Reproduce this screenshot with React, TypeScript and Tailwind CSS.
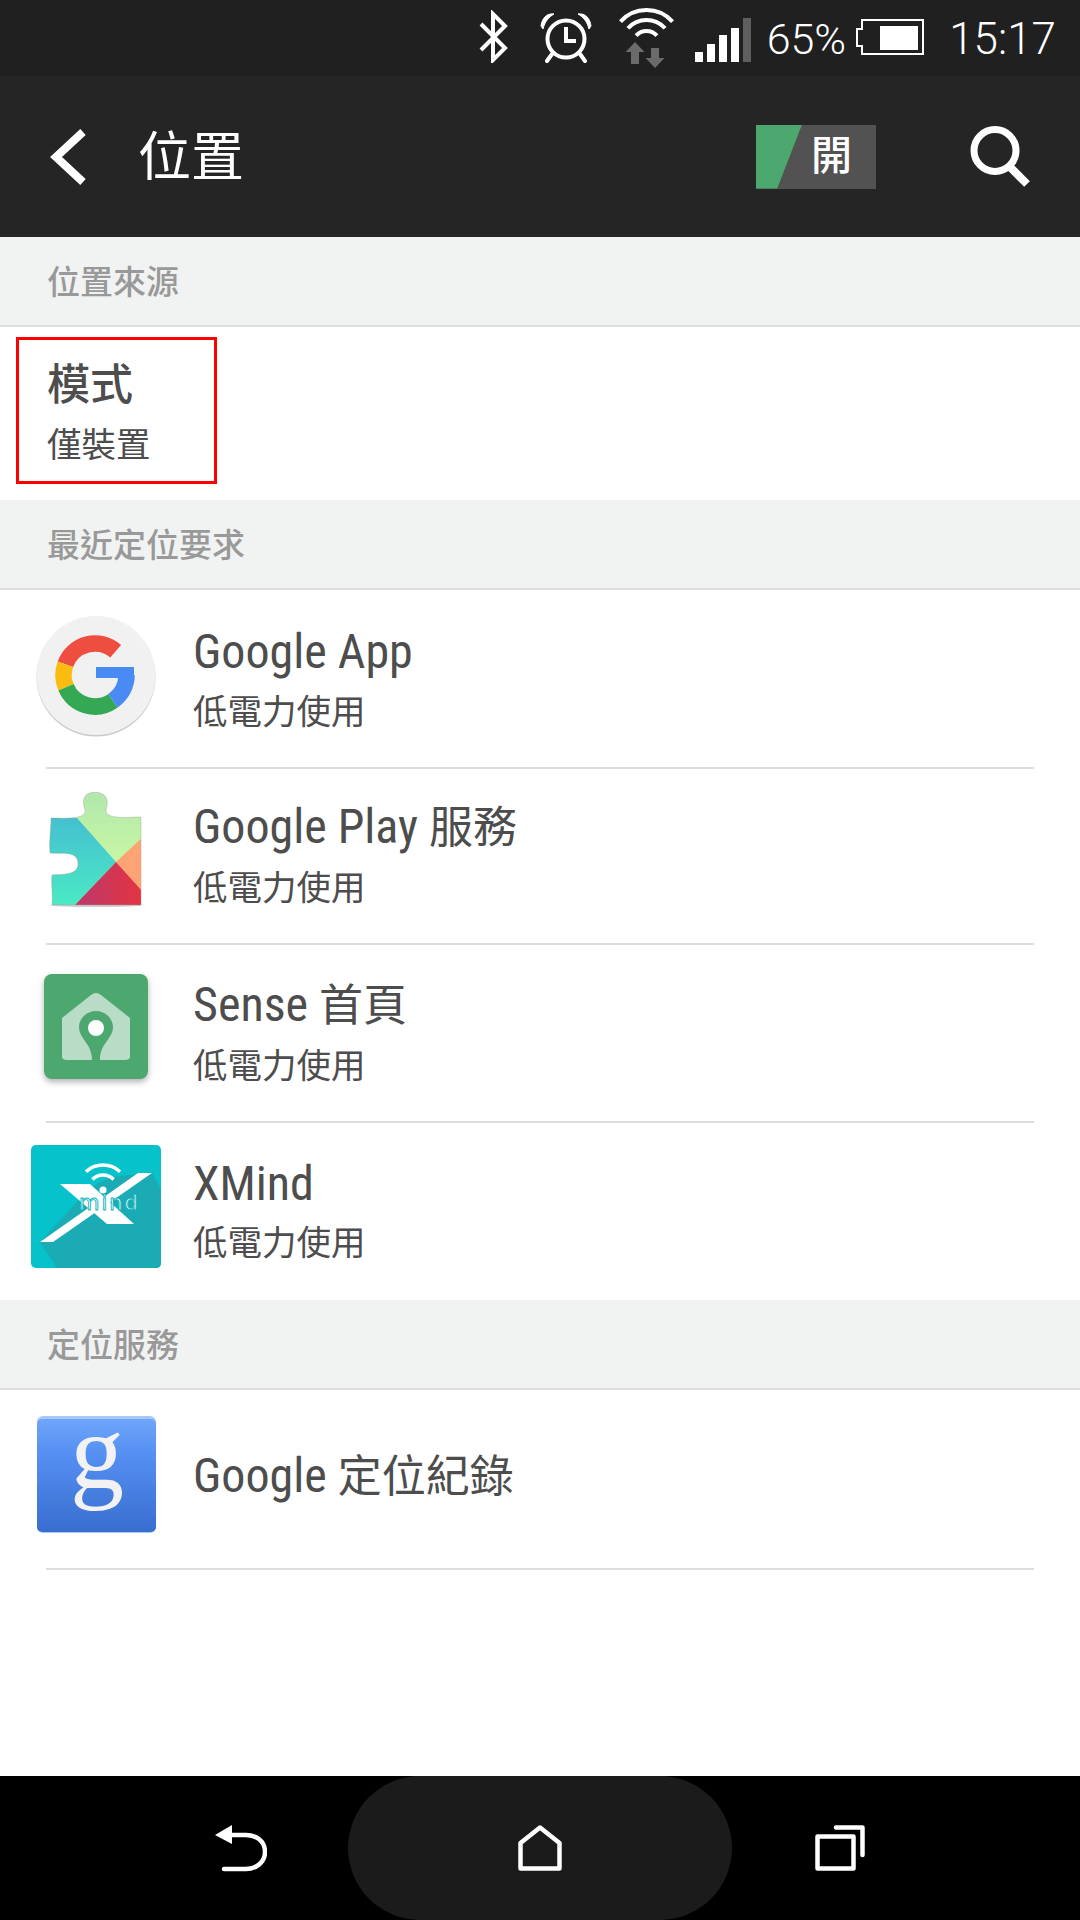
import React from "react";

const polar = (cx: number, cy: number, r: number, a: number) => {
  const t = (a * Math.PI) / 180;
  return [cx + r * Math.cos(t), cy + r * Math.sin(t)];
};
const arc = (cx: number, cy: number, r: number, a0: number, a1: number) => {
  const [x0, y0] = polar(cx, cy, r, a0);
  const [x1, y1] = polar(cx, cy, r, a1);
  const large = Math.abs(a1 - a0) > 180 ? 1 : 0;
  return `M${x0} ${y0} A${r} ${r} 0 ${large} 1 ${x1} ${y1}`;
};

function Bluetooth() {
  return (
    <svg className="mt-[10px] h-[53px] w-[30px]" viewBox="0 0 30 53" fill="none" stroke="#fff" strokeWidth="4">
      <path d="M3 14 L27 38 L15 50 V4 L27 16 L3 40" />
    </svg>
  );
}
function Alarm() {
  return (
    <svg className="ml-[32px] mt-[12px] h-[51px] w-[52px]" viewBox="0 0 52 51" fill="none" stroke="#fff">
      <circle cx="26" cy="27" r="18.5" strokeWidth="4" />
      <path d="M26 15 V29 H36" strokeWidth="4" />
      <path d="M1 14 C2 6 7 1 14 2 C9 5 5 9 3 17 Z" fill="#fff" strokeWidth="1" />
      <path d="M51 14 C50 6 45 1 38 2 C43 5 47 9 49 17 Z" fill="#fff" strokeWidth="1" />
      <path d="M12 42 L7 49 M40 42 L45 49" strokeWidth="4" strokeLinecap="round" />
    </svg>
  );
}
function Wifi() {
  return (
    <svg className="ml-[23px] mt-[8px] h-[60px] w-[63px]" viewBox="0 0 63 60" fill="none">
      <g stroke="#fff" strokeWidth="4">
        <path d={arc(31.5, 37, 35, 222, 318)} />
        <path d={arc(31.5, 37, 25, 222, 318)} />
        <path d={arc(31.5, 37, 14, 222, 318)} />
      </g>
      <path d="M20 34 L29.5 44 H24 V56 H16 V44 H10.5 Z" fill="#6b6b6b" />
      <path d="M36 40 H44 V50 H49.5 L40 60 L30.5 50 H36 Z" fill="#6b6b6b" />
    </svg>
  );
}
function Signal() {
  return (
    <svg className="ml-[17px] mt-[18px] h-[44px] w-[56px]" viewBox="0 0 56 44">
      <rect x="0" y="34" width="8" height="10" fill="#fff" />
      <rect x="12" y="26" width="8" height="18" fill="#fff" />
      <rect x="24" y="17" width="8" height="27" fill="#fff" />
      <rect x="36" y="10" width="8" height="34" fill="#fff" />
      <rect x="48" y="0" width="8" height="44" fill="#5f5f5f" />
    </svg>
  );
}
function Battery() {
  return (
    <svg className="ml-[10px] mt-[19px] h-[36px] w-[68px]" viewBox="0 0 68 36" fill="none">
      <path d="M6 1 H67 V35 H6 V27 H1 V10 H6 Z" stroke="#fff" strokeWidth="2" />
      <rect x="24" y="7" width="38" height="24" fill="#fff" />
    </svg>
  );
}
function Chevron() {
  return (
    <svg className="h-[56px] w-[36px]" viewBox="0 0 36 56" fill="none" stroke="#fff" strokeWidth="8">
      <path d="M33 3 L6 28 L33 53" />
    </svg>
  );
}
function Search() {
  return (
    <svg className="h-[61px] w-[61px]" viewBox="0 0 61 61" fill="none" stroke="#fff">
      <circle cx="25" cy="24.5" r="21" strokeWidth="7" />
      <path d="M39 40 L57 58" strokeWidth="8" />
    </svg>
  );
}
function GoogleIcon() {
  const cx = 60, cy = 59, r = 31.5;
  return (
    <svg className="mb-[4px] h-[122px] w-[122px]" viewBox="0 0 122 122" fill="none">
      <circle cx="61" cy="61" r="59.5" fill="#c9c9c9" />
      <circle cx="61" cy="59.5" r="59.5" fill="#f1f1f1" />
      <g strokeWidth="16.5">
        <path d={arc(cx, cy, r, 200, 311)} stroke="#ee4e3f" />
        <path d={arc(cx, cy, r, 157, 200)} stroke="#fbbc12" />
        <path d={arc(cx, cy, r, 55, 157)} stroke="#34a853" />
        <path d={arc(cx, cy, r, 0, 55)} stroke="#4a8af4" />
      </g>
      <path d="M61 51 H99 V62 H61 Z" fill="#4a8af4" />
    </svg>
  );
}
function PuzzleIcon() {
  const shape =
    "M2 26 C14 26 38 28 36 18 C33 8 34 1 46 0 C58 1 60 8 57 18 C56 28 80 25 92 25 V113 H3 C4 104 2 90 3 83 C12 82 30 84 29 71 C29 58 10 62 1 61 C0 48 2 38 2 26 Z";
  return (
    <svg className="mb-[12px] h-[116px] w-[94px]" viewBox="0 0 94 116">
      <defs>
        <clipPath id="pz"><path d={shape} /></clipPath>
        <linearGradient id="pzg" x1="0" y1="0" x2="0" y2="1">
          <stop offset="0" stopColor="#b0e8ac" />
          <stop offset="1" stopColor="#d8ff9e" />
        </linearGradient>
        <linearGradient id="pzt" x1="0" y1="0" x2="0" y2="1">
          <stop offset="0" stopColor="#45c0d0" />
          <stop offset="1" stopColor="#4aeac4" />
        </linearGradient>
        <linearGradient id="pzr" x1="0" y1="0" x2="1" y2="0">
          <stop offset="0" stopColor="#b93a6e" />
          <stop offset="1" stopColor="#e5333f" />
        </linearGradient>
      </defs>
      <ellipse cx="47" cy="113.5" rx="46" ry="1.5" fill="#cfcfcf" />
      <g clipPath="url(#pz)">
        <rect x="0" y="0" width="94" height="114" fill="url(#pzg)" />
        <path d="M0 26 H28 L67 70 L25 114 H0 Z" fill="url(#pzt)" />
        <path d="M67 70 L94 45 V100 Z" fill="#ffa374" />
        <path d="M67 70 L94 100 V114 H25 Z" fill="url(#pzr)" />
      </g>
      <path d={shape} fill="none" stroke="#a89f98" strokeWidth="0.6" opacity="0.7" />
    </svg>
  );
}
function SenseIcon() {
  return (
    <svg className="mb-[8px] h-[112px] w-[110px] drop-shadow-[0_3px_3px_rgba(0,0,0,0.3)]" viewBox="0 0 110 112">
      <rect x="3" y="1" width="104" height="105" rx="8" fill="#4da870" />
      <path d="M21 45 L50 22 Q55 18 60 22 L89 45 V84 Q89 86 85 87 H25 Q21 86 21 84 Z" fill="#b9dcc7" />
      <path d="M55 38 C45 38 38 46 38 54 C38 66 51 70 51 87 H59 C59 70 72 66 72 54 C72 46 65 38 55 38 Z" fill="#4da870" />
      <circle cx="55" cy="55" r="8" fill="#fff" />
    </svg>
  );
}
function XMindIcon() {
  return (
    <svg className="mb-[10px] h-[123px] w-[130px]" viewBox="0 0 130 123">
      <rect width="130" height="123" rx="5" fill="#05c2cb" />
      <path d="M9 97 L26 123 H125 Q130 123 130 118 V45 L121 28 L80 32 L60 42 Z" fill="#1aabb5" />
      <path d="M29 39 H59 L103 79 H76 Z" fill="#fff" />
      <path d="M121 28 H107 L9 97 H22 Z" fill="#fff" />
      <g fill="none" stroke="#fff" strokeWidth="3.5">
        <path d={arc(72, 45, 25, 227, 313)} />
        <path d={arc(72, 45, 15, 225, 315)} />
      </g>
      <circle cx="72" cy="45" r="3.5" fill="#fff" />
      <text x="48" y="65" fontFamily="'DejaVu Sans', sans-serif" fontSize="21" fill="#fff" stroke="#05b4bd" strokeWidth="0.9" letterSpacing="2">mind</text>
    </svg>
  );
}
function GLocIcon() {
  return (
    <svg className="mb-[10px] h-[117px] w-[119px] overflow-visible" viewBox="0 0 119 117">
      <defs>
        <linearGradient id="gl" x1="0" y1="0" x2="0" y2="1">
          <stop offset="0" stopColor="#6fa5fa" />
          <stop offset="0.3" stopColor="#5590f2" />
          <stop offset="1" stopColor="#386ecf" />
        </linearGradient>
      </defs>
      <rect width="119" height="117" rx="6" fill="#a6c7fa" />
      <rect y="3" width="119" height="113" rx="5" fill="url(#gl)" />
      <text x="60" y="72" textAnchor="middle" fontFamily="'Liberation Serif', serif" fontSize="108" fill="#f2f2f5">g</text>
    </svg>
  );
}
function NavBack() {
  return (
    <svg className="h-[47px] w-[52px]" viewBox="0 0 52 47" fill="none">
      <path d="M0 10 L17 0 V19 Z" fill="#fff" />
      <path d="M15 10 H31 C40 10 50 15 50 27 C50 38 40 44 31 44 H9" stroke="#fff" strokeWidth="4.5" strokeLinecap="round" />
    </svg>
  );
}
function NavHome() {
  return (
    <svg className="h-[46px] w-[44px]" viewBox="0 0 44 46" fill="none" stroke="#fff" strokeWidth="4.5" strokeLinejoin="round">
      <path d="M2.5 43.5 V18 L22 2.5 L41.5 18 V43.5 Z" />
    </svg>
  );
}
function NavRecents() {
  return (
    <svg className="h-[46px] w-[50px]" viewBox="0 0 50 46" fill="none" stroke="#fff" strokeWidth="4.5" strokeLinejoin="round" strokeLinecap="round">
      <rect x="2.5" y="11.5" width="36" height="32" />
      <path d="M21 2.5 H47.5 V30" />
    </svg>
  );
}

function Section({ children }: { children: React.ReactNode }) {
  return (
    <div className="flex h-[90px] items-center border-b-2 border-[#dddddd] bg-[#f1f3f2] pl-[47px] pt-[4px] text-[33px] font-medium text-[#999999]">
      {children}
    </div>
  );
}
function Lat({ children }: { children: React.ReactNode }) {
  return <span className="text-[48px] [font-stretch:75%]">{children}</span>;
}
function Row({ h, icon, title, sub, off = "", subOff = "" }: { h: string; icon: React.ReactNode; title: React.ReactNode; sub?: string; off?: string; subOff?: string }) {
  return (
    <div className={`flex items-center ${h}`}>
      <div className="flex w-[193px] shrink-0 justify-center pr-[1px]">{icon}</div>
      <div className="flex flex-col text-[#4d4d4d]">
        <div className={`h-[60px] text-[44px] leading-[60px] whitespace-pre ${off}`}>{title}</div>
        {sub && <div className={`h-[60px] text-[34.5px] leading-[60px] ${subOff}`}>{sub}</div>}
      </div>
    </div>
  );
}
function Divider() {
  return <div className="mx-[46px] h-[2px] bg-[#dddddd]" />;
}

export default function App() {
  return (
    <div className="flex h-[1920px] w-[1080px] flex-col overflow-hidden bg-white font-['Roboto','Noto_Sans_CJK_TC',sans-serif]">
      <div className="flex h-[76px] shrink-0 items-start justify-end bg-[#202020] pr-[24px]">
        <Bluetooth />
        <Alarm />
        <Wifi />
        <Signal />
        <span className="ml-[16px] text-[43px] leading-[78px] font-light text-white">65%</span>
        <Battery />
        <span className="ml-[25px] text-[44px] leading-[78px] font-light text-white">15:17</span>
      </div>

      <div className="flex h-[161px] shrink-0 items-center bg-[#252525] pl-[50px] pr-[49px]">
        <Chevron />
        <div className="ml-[52px] flex-1 pt-[4px] text-[53px] text-white">位置</div>
        <div className="relative flex h-[64px] w-[120px] items-center justify-end bg-[#525252] pr-[24px] text-[41px] font-medium text-white">
          <div className="absolute left-0 top-0 h-full w-[46px] bg-[#4da870] [clip-path:polygon(0_0,100%_0,46%_100%,0_100%)]" />
          開
        </div>
        <div className="ml-[94px]">
          <Search />
        </div>
      </div>

      <Section>位置來源</Section>
      <div className="relative flex h-[173px] flex-col justify-center pl-[47px] pt-[3px] text-[#4d4d4d]">
        <div className="h-[60px] text-[43px] leading-[60px] font-medium">模式</div>
        <div className="h-[60px] text-[34.5px] leading-[60px]">僅裝置</div>
        <div className="absolute left-[16px] top-[10px] h-[147px] w-[201px] border-[3px] border-[#ff0000]" />
      </div>

      <Section>最近定位要求</Section>
      <Row h="h-[177px]" icon={<GoogleIcon />} title={<Lat>Google App</Lat>} sub="低電力使用" off="mt-[3px] mb-[-3px]" subOff="mt-[3px] mb-[-3px]" />
      <Divider />
      <Row h="h-[174px]" icon={<PuzzleIcon />} title={<><Lat>Google Play </Lat>服務</>} sub="低電力使用" off="mt-[1px] mb-[-1px]" subOff="mt-[2px] mb-[-2px]" />
      <Divider />
      <Row h="h-[176px]" icon={<SenseIcon />} title={<><Lat>Sense </Lat>首頁</>} sub="低電力使用" off="mt-[2px] mb-[-2px]" subOff="mt-[3px] mb-[-3px]" />
      <Divider />
      <Row h="h-[177px]" icon={<XMindIcon />} title={<Lat>XMind</Lat>} sub="低電力使用" off="mt-[2px] mb-[-2px]" subOff="mt-[1px] mb-[-1px]" />

      <Section>定位服務</Section>
      <Row h="h-[178px]" icon={<GLocIcon />} title={<><Lat>Google </Lat>定位紀錄</>} off="mt-[-3px] mb-[3px]" />
      <Divider />
      <div className="flex-1" />

      <div className="flex h-[144px] shrink-0 items-center justify-center bg-black">
        <NavBack />
        <div className="ml-[81px] mr-[83px] flex h-full w-[384px] items-center justify-center rounded-[72px] bg-[#1b1b1b]">
          <NavHome />
        </div>
        <NavRecents />
      </div>
    </div>
  );
}
